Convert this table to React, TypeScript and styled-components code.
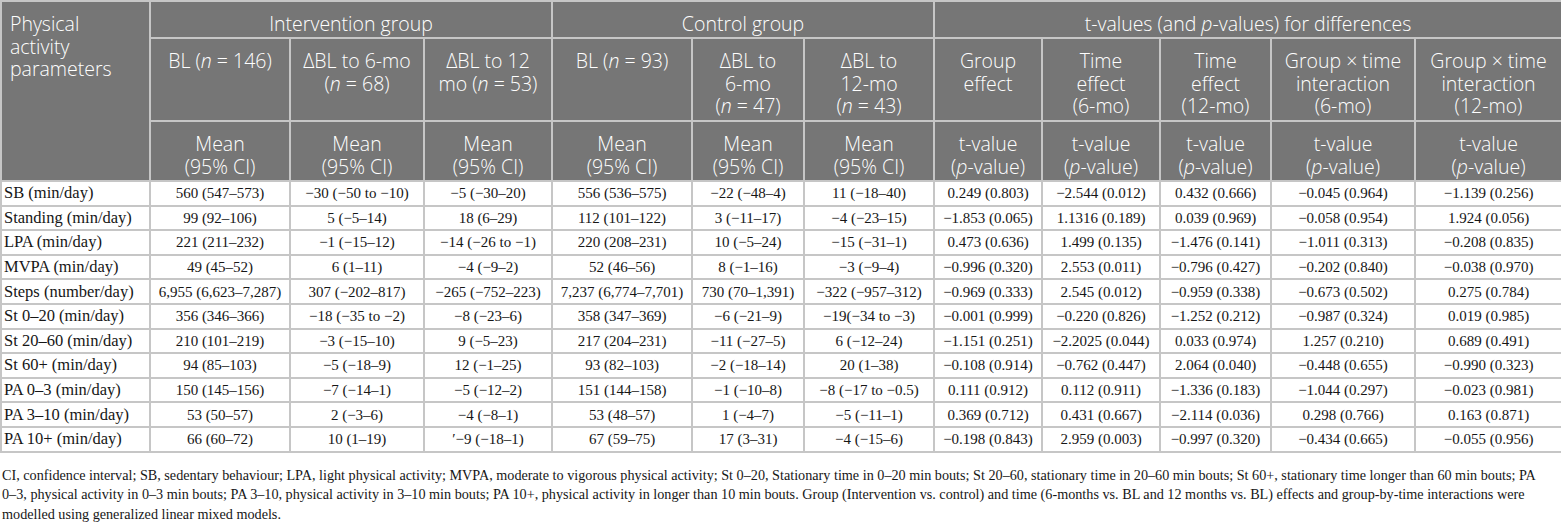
import React from 'react'
import styled, { createGlobalStyle } from 'styled-components'

const GlobalStyle = createGlobalStyle`
  html, body {
    margin: 0;
    padding: 0;
    background: #ffffff;
  }
`

const COL_WIDTHS = [149, 140, 134, 128, 140, 112, 130, 108, 118, 111, 144, 147]

const Page = styled.div`
  width: 1561px;
`

const Table = styled.table`
  width: 1561px;
  table-layout: fixed;
  border-collapse: collapse;
  border: 2px solid #c6c6c6;
`

const HeadRow = styled.tr<{ h: number }>`
  height: ${({ h }) => h}px;
`

const HeadCell = styled.th<{ align?: 'left' | 'center' }>`
  background: #767676;
  color: #ffffff;
  font-family: 'Open Sans', 'Liberation Sans', sans-serif;
  font-weight: 350;
  font-size: 19.5px;
  line-height: 22.5px;
  text-align: ${({ align }) => align || 'center'};
  vertical-align: top;
  white-space: nowrap;
  border: 2px solid #c6c6c6;
  padding: ${({ align }) => (align === 'left' ? '11px 6px 0 8px' : '11px 2px 0')};

  i {
    font-style: italic;
  }
`

const BodyRow = styled.tr`
  height: 24.6px;
`

const Cell = styled.td<{ first?: boolean }>`
  font-family: 'Liberation Serif', 'Times New Roman', serif;
  font-size: ${({ first }) => (first ? '16.5px' : '15px')};
  line-height: 18px;
  color: #161616;
  text-align: ${({ first }) => (first ? 'left' : 'center')};
  vertical-align: middle;
  white-space: nowrap;
  border: 2px solid #c6c6c6;
  padding: 1px 2px;
`

const Footnote = styled.p`
  margin: 13px 0 0;
  padding: 0 2px;
  font-family: 'Liberation Serif', 'Times New Roman', serif;
  font-size: 14.2px;
  line-height: 19.5px;
  color: #161616;
  white-space: nowrap;
`

const rows: string[][] = [
  ['SB (min/day)', '560 (547–573)', '−30 (−50 to −10)', '−5 (−30–20)', '556 (536–575)', '−22 (−48–4)', '11 (−18–40)', '0.249 (0.803)', '−2.544 (0.012)', '0.432 (0.666)', '−0.045 (0.964)', '−1.139 (0.256)'],
  ['Standing (min/day)', '99 (92–106)', '5 (−5–14)', '18 (6–29)', '112 (101–122)', '3 (−11–17)', '−4 (−23–15)', '−1.853 (0.065)', '1.1316 (0.189)', '0.039 (0.969)', '−0.058 (0.954)', '1.924 (0.056)'],
  ['LPA (min/day)', '221 (211–232)', '−1 (−15–12)', '−14 (−26 to −1)', '220 (208–231)', '10 (−5–24)', '−15 (−31–1)', '0.473 (0.636)', '1.499 (0.135)', '−1.476 (0.141)', '−1.011 (0.313)', '−0.208 (0.835)'],
  ['MVPA (min/day)', '49 (45–52)', '6 (1–11)', '−4 (−9–2)', '52 (46–56)', '8 (−1–16)', '−3 (−9–4)', '−0.996 (0.320)', '2.553 (0.011)', '−0.796 (0.427)', '−0.202 (0.840)', '−0.038 (0.970)'],
  ['Steps (number/day)', '6,955 (6,623–7,287)', '307 (−202–817)', '−265 (−752–223)', '7,237 (6,774–7,701)', '730 (70–1,391)', '−322 (−957–312)', '−0.969 (0.333)', '2.545 (0.012)', '−0.959 (0.338)', '−0.673 (0.502)', '0.275 (0.784)'],
  ['St 0–20 (min/day)', '356 (346–366)', '−18 (−35 to −2)', '−8 (−23–6)', '358 (347–369)', '−6 (−21–9)', '−19(−34 to −3)', '−0.001 (0.999)', '−0.220 (0.826)', '−1.252 (0.212)', '−0.987 (0.324)', '0.019 (0.985)'],
  ['St 20–60 (min/day)', '210 (101–219)', '−3 (−15–10)', '9 (−5–23)', '217 (204–231)', '−11 (−27–5)', '6 (−12–24)', '−1.151 (0.251)', '−2.2025 (0.044)', '0.033 (0.974)', '1.257 (0.210)', '0.689 (0.491)'],
  ['St 60+ (min/day)', '94 (85–103)', '−5 (−18–9)', '12 (−1–25)', '93 (82–103)', '−2 (−18–14)', '20 (1–38)', '−0.108 (0.914)', '−0.762 (0.447)', '2.064 (0.040)', '−0.448 (0.655)', '−0.990 (0.323)'],
  ['PA 0–3 (min/day)', '150 (145–156)', '−7 (−14–1)', '−5 (−12–2)', '151 (144–158)', '−1 (−10–8)', '−8 (−17 to −0.5)', '0.111 (0.912)', '0.112 (0.911)', '−1.336 (0.183)', '−1.044 (0.297)', '−0.023 (0.981)'],
  ['PA 3–10 (min/day)', '53 (50–57)', '2 (−3–6)', '−4 (−8–1)', '53 (48–57)', '1 (−4–7)', '−5 (−11–1)', '0.369 (0.712)', '0.431 (0.667)', '−2.114 (0.036)', '0.298 (0.766)', '0.163 (0.871)'],
  ['PA 10+ (min/day)', '66 (60–72)', '10 (1–19)', '′−9 (−18–1)', '67 (59–75)', '17 (3–31)', '−4 (−15–6)', '−0.198 (0.843)', '2.959 (0.003)', '−0.997 (0.320)', '−0.434 (0.665)', '−0.055 (0.956)'],
]

const MeanCI = () => (
  <>
    Mean
    <br />
    (95% CI)
  </>
)

const TValue = () => (
  <>
    t-value
    <br />(<i>p</i>-value)
  </>
)

const App = () => {
  return (
    <Page>
      <GlobalStyle />
      <Table>
        <colgroup>
          {COL_WIDTHS.map((w, i) => (
            <col key={i} style={{ width: w }} />
          ))}
        </colgroup>
        <thead>
          <HeadRow h={37}>
            <HeadCell rowSpan={3} align="left">
              Physical
              <br />
              activity
              <br />
              parameters
            </HeadCell>
            <HeadCell colSpan={3}>Intervention group</HeadCell>
            <HeadCell colSpan={3}>Control group</HeadCell>
            <HeadCell colSpan={5}>
              t-values (and <i>p</i>-values) for differences
            </HeadCell>
          </HeadRow>
          <HeadRow h={83}>
            <HeadCell>
              BL (<i>n</i> = 146)
            </HeadCell>
            <HeadCell>
              ΔBL to 6-mo
              <br />(<i>n</i> = 68)
            </HeadCell>
            <HeadCell>
              ΔBL to 12
              <br />
              mo (<i>n</i> = 53)
            </HeadCell>
            <HeadCell>
              BL (<i>n</i> = 93)
            </HeadCell>
            <HeadCell>
              ΔBL to
              <br />
              6-mo
              <br />(<i>n</i> = 47)
            </HeadCell>
            <HeadCell>
              ΔBL to
              <br />
              12-mo
              <br />(<i>n</i> = 43)
            </HeadCell>
            <HeadCell>
              Group
              <br />
              effect
            </HeadCell>
            <HeadCell>
              Time
              <br />
              effect
              <br />
              (6-mo)
            </HeadCell>
            <HeadCell>
              Time
              <br />
              effect
              <br />
              (12-mo)
            </HeadCell>
            <HeadCell>
              Group × time
              <br />
              interaction
              <br />
              (6-mo)
            </HeadCell>
            <HeadCell>
              Group × time
              <br />
              interaction
              <br />
              (12-mo)
            </HeadCell>
          </HeadRow>
          <HeadRow h={60}>
            {[0, 1, 2, 3, 4, 5].map((i) => (
              <HeadCell key={i}>
                <MeanCI />
              </HeadCell>
            ))}
            {[0, 1, 2, 3, 4].map((i) => (
              <HeadCell key={`t${i}`}>
                <TValue />
              </HeadCell>
            ))}
          </HeadRow>
        </thead>
        <tbody>
          {rows.map((r) => (
            <BodyRow key={r[0]}>
              {r.map((v, i) => (
                <Cell key={i} first={i === 0}>
                  {v}
                </Cell>
              ))}
            </BodyRow>
          ))}
        </tbody>
      </Table>
      <Footnote>
        CI, confidence interval; SB, sedentary behaviour; LPA, light physical activity; MVPA, moderate to vigorous
        physical activity; St 0–20, Stationary time in 0–20 min bouts; St 20–60, stationary time in 20–60 min bouts; St
        60+, stationary time longer than 60 min bouts; PA
        <br />
        0–3, physical activity in 0–3 min bouts; PA 3–10, physical activity in 3–10 min bouts; PA 10+, physical activity
        in longer than 10 min bouts. Group (Intervention vs. control) and time (6-months vs. BL and 12 months vs. BL)
        effects and group-by-time interactions were
        <br />
        modelled using generalized linear mixed models.
      </Footnote>
    </Page>
  )
}

export default App
